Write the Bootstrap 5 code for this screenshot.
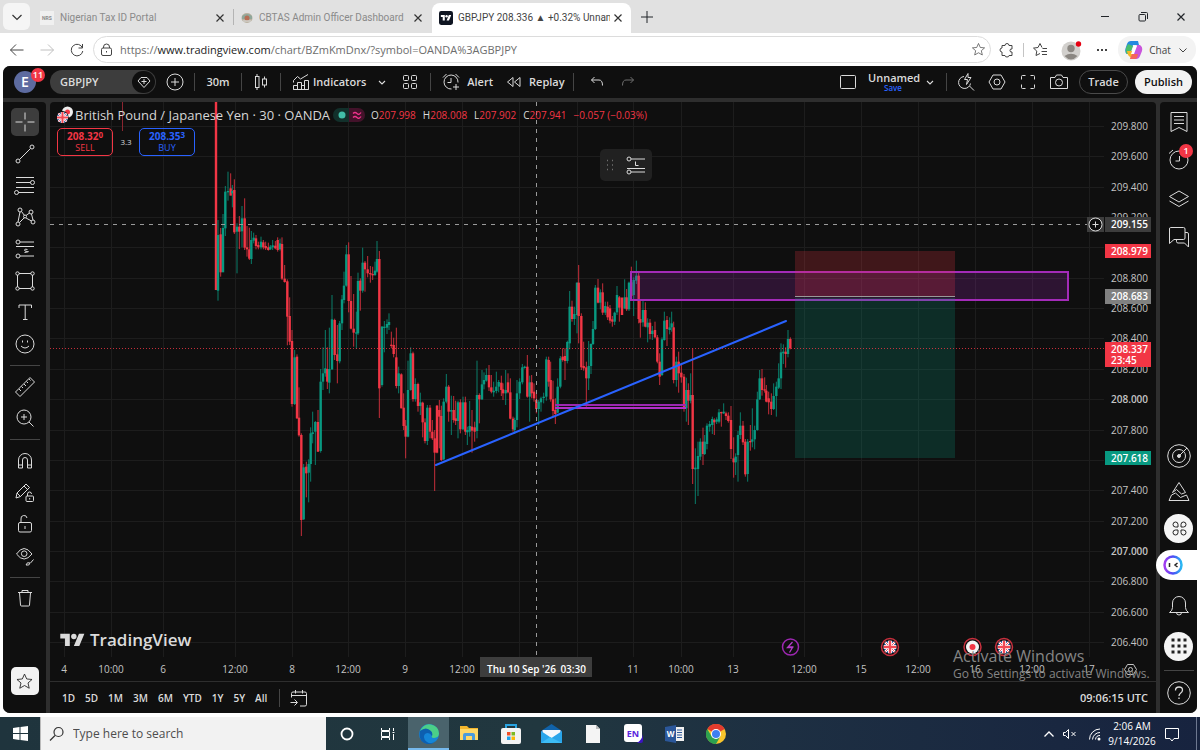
<!DOCTYPE html>
<html lang="en">
<head>
<meta charset="utf-8">
<meta name="viewport" content="width=device-width, initial-scale=1">
<title>GBPJPY 208.336 ▲ +0.32% Unnamed</title>
<link href="https://cdn.jsdelivr.net/npm/bootstrap@5.3.0/dist/css/bootstrap.min.css" rel="stylesheet">
<style>
  body { font-family: "Open Sans", "Noto Sans", sans-serif; font-size: 11px; line-height: 16px; background: #fff; color: #dbdbdb; }
  button { background: none; border: 0; padding: 0; color: inherit; font: inherit; white-space: nowrap; }
  svg { flex: none; display: block; }
  .ico { width: 24px; height: 24px; fill: none; stroke: currentColor; stroke-width: 1; }
  .slot { display: inline-flex; align-items: center; justify-content: center; flex: none; }
  .s16 { width: 16px; } .s24 { width: 24px; } .s30 { width: 30px; } .s32 { width: 32px; } .s38 { width: 38px; }

  /* browser tabs */
  .tabstrip { height: 33px; background: #e1e1e1; color: #8a8a8a; font-family: Roboto, sans-serif; font-size: 10px; }
  .tabmenu { width: 27px; height: 27px; background: #f5f5f5; border-radius: 6px; color: #333; margin: 0 3px; }
  .tab { height: 30px; margin-top: 3px; flex: none; padding: 0 5px 0 7px; }
  .tab span { flex: 1; overflow: hidden; white-space: nowrap; margin-left: 6px; }
  .tab button { color: #333; }
  .tab-a { width: 200px; } .tab-b { width: 198px; padding-right: 2px; }
  .tab-on { width: 199px; background: #fff; border-radius: 8px 8px 0 0; color: #444; }
  .tab-on span { margin-left: 5px; }
  .tabsep { width: 1px; height: 16px; background: #b4b4b4; }
  .nrs { width: 14px; height: 14px; background: #f0f0f0; font-size: 5px; font-weight: 700; line-height: 14px; text-align: center; }

  /* address bar */
  .urlbar { height: 33px; color: #444; padding: 0 4px 0 2px; }
  .urlbar .barsep { width: 1px; height: 14px; background: #c4c4c4; }
  .address { height: 27px; border: 1px solid #dcdcdc; border-radius: 14px; padding: 0; min-width: 0; margin-left: 1px; }
  .address a { color: #6d6d6d; text-decoration: none; font-size: 11px; margin-left: 2px; white-space: nowrap; }
  .address b { color: #222; font-weight: 400; }
  .copilot { background: #f3f3f3; border-radius: 13px; height: 27px; width: 78px; font-size: 10px; gap: 6px; }

  /* charting app */
  .app { margin: 0 3px 4px; background: #2e2e2e; border-radius: 7px; overflow: hidden; min-height: 0; }
  .topbar { height: 32px; background: #0f0f0f; font-weight: 600; font-size: 11px; }
  .vsep { width: 1px; height: 18px; background: #454545; flex: none; }
  .avatar { width: 22px; height: 22px; border-radius: 50%; background: #5d6ba0; color: #fff; font-size: 14px; margin: 0 14px 0 11px; }
  .count { position: absolute; top: -3px; right: -9px; min-width: 14px; height: 14px; border-radius: 7px; background: #f23645; color: #fff; font-size: 9px; line-height: 14px; text-align: center; font-weight: 600; }
  .symbol { width: 106px; height: 24px; border-radius: 12px; background: #3d3d3d; padding: 0 1px 0 10px; }
  .symbol i { width: 23px; height: 22px; border-radius: 11px; background: #0f0f0f; }
  .interval { width: 46px; }
  .dim { color: #707070; }
  .save { font-size: 8px; line-height: 8px; color: #2962ff; font-weight: 600; }
  .layoutname { width: 50px; line-height: 12px; }
  .trade { height: 24px; width: 49px; border: 1px solid #4a4a4a; border-radius: 12px; margin-left: 8px; }
  .publish { height: 24px; width: 57px; background: #f2f2f2; color: #0f0f0f; border-radius: 12px; margin: 0 5px 0 7px; }

  .work { gap: 4px; padding-top: 4px; min-height: 0; }
  .rail { background: #0f0f0f; flex: none; padding-top: 6px; }
  .rail-l { width: 43px; border-radius: 0 4px 0 0; }
  .rail-r { width: 37px; border-radius: 4px 0 0 0; padding-bottom: 2px; }
  .tool { width: 28px; height: 28px; border-radius: 5px; flex: none; }
  .tool.on { background: #3d3d3d; }
  .tool.fav { background: #f2f2f2; color: #222; margin-bottom: 18px; }
  .g1 { height: 250px; } .g2 { height: 59px; } .g3 { height: 123px; } .g4 { height: 143px; }
  .rule { width: 30px; height: 1px; background: #454545; margin: 7px 0; flex: none; }
  .rtool { width: 37px; height: 36px; flex: none; position: relative; }
  .g4 .rtool { height: 28px; }
  .rtool .count { top: -2px; right: 4px; }
  .rail-r .rule { margin: 6px 0 4px; }
  .disc { width: 29px; height: 29px; border-radius: 50%; background: #f5f5f5; color: #222; }
  .assistant { width: 41px; height: 30px; margin: 4px 0 8px -4px; padding-right: 7px; background: #fff; border-radius: 15px 0 0 15px; z-index: 2; }

  .pane { background: #0f0f0f; border-radius: 4px 4px 0 0; min-width: 0; }
  .plot { min-height: 0; overflow: hidden; }
  .plot > svg { width: 100%; height: 100%; position: absolute; }
  .plot > svg text { font-size: 10px; fill: #c4c4c4; }
  .plot > svg .strong { font-weight: 600; }
  .plot > svg .tag { fill: #fff; font-weight: 600; }
  .legend { position: absolute; left: 7px; top: 4px; }
  .legend h1 { font-size: 13px; line-height: 18px; margin: 0 0 0 2px; font-weight: 400; color: #d6d6d6; white-space: nowrap; }
  .ohlc { color: #f23645; font-size: 10px; gap: 7px; white-space: nowrap; }
  .ohlc b { color: #dbdbdb; font-weight: 400; }
  .mood { width: 32px; height: 14px; border-radius: 7px; background: linear-gradient(90deg,#12302b 50%,#43122a 50%); margin: 0 6px 0 3px; }
  .quote { width: 56px; height: 28px; border: 1px solid; border-radius: 5px; font-size: 9px; line-height: 12px; }
  .quote strong { display: block; font-size: 10px; font-weight: 700; }
  .quote sup { font-size: 8px; top: -2px; }
  .sell { color: #f23645; } .buy { color: #2962ff; }
  .spread { width: 26px; font-size: 8px; text-align: center; }
  .floatbar { position: absolute; left: 550px; top: 47px; width: 52px; height: 32px; border-radius: 5px; background: #212121; }
  .brand { position: absolute; left: 10px; bottom: 31px; font-size: 17px; font-weight: 600; line-height: 20px; gap: 5px; }
  .watermark { position: absolute; left: 903px; bottom: -2px; color: #858585; font-size: 12px; line-height: 18px; white-space: nowrap; pointer-events: none; z-index: 3; }
  .watermark strong { display: block; font-weight: 400; font-size: 16px; }
  .ranges { height: 32px; border-top: 1px solid #2e2e2e; font-size: 10px; font-weight: 600; padding: 0 8px 0 12px; flex: none; }
  .ranges .list { gap: 10px; }
  .ranges .vsep { margin-left: 12px; }
  .utc { font-size: 11px; }

  /* desktop taskbar */
  .taskbar { height: 33px; background: linear-gradient(90deg,#1f343d 0,#21373f 45%,#1d2f42 65%,#17233f 100%); flex: none; color: #fff; }
  .start { width: 40px; }
  .finder { width: 286px; background: #f2f2f2; color: #333; padding-left: 8px; border-left: 1px solid #bbb; }
  .finder input { border: 0; background: none; outline: 0; font-size: 12px; color: #444; width: 100%; padding: 0 0 0 8px; }
  .finder input::placeholder { color: #4d4d4d; opacity: 1; }
  .app-ico { width: 41px; height: 33px; }
  .app-ico.on { background: #4a636c; box-shadow: inset 0 -2px #76b9ed; }
  .clock { font-size: 10px; line-height: 15px; width: 48px; text-align: center; }
  .notif { width: 30px; margin-right: 8px; }
  .peek { width: 4px; border-left: 1px solid #6d7890; }
  .tray { gap: 1px; }
</style>
</head>
<body class="vh-100 overflow-hidden d-flex flex-column">

<svg width="0" height="0" class="position-absolute">
  <defs>
    <symbol id="uk" viewBox="0 0 16 16"><circle cx="8" cy="8" r="8" fill="#1a4f9c"/><path d="M2 2l12 12M14 2L2 14" stroke="#fff" stroke-width="3"/><path d="M2 2l12 12M14 2L2 14" stroke="#f23645" stroke-width="1"/><path d="M8 0v16M0 8h16" stroke="#fff" stroke-width="5"/><path d="M8 0v16M0 8h16" stroke="#f24854" stroke-width="3"/></symbol>
    <symbol id="close" viewBox="0 0 24 24"><path d="M8.500 8.500l7 7M15.500 8.500l-7 7" stroke="currentColor" fill="none" stroke-width="1.200"/></symbol>
    <symbol id="down" viewBox="0 0 24 24"><path d="M9 11l3 3 3-3" stroke="currentColor" fill="none" stroke-width="1.100"/></symbol>
    <symbol id="tv" viewBox="0 0 36 28"><path d="M14 22H7V11H0V4h14v18zM28 22h-8l7.500-18h8L28 22z"/><circle cx="20" cy="8" r="4"/></symbol>
    <symbol id="star" viewBox="0 0 24 24"><path d="M12 3.500l2.500 5.600 6.100.600-4.600 4 1.400 6L12 16.600l-5.400 3.100 1.400-6-4.600-4 6.100-.600z" fill="none" stroke="currentColor"/></symbol>
  </defs>
</svg>

<div class="tabstrip d-flex align-items-center flex-shrink-0">
  <button class="tabmenu slot" aria-label="Tab menu"><svg class="ico"><path d="M7.500 10l4.500 4.500 4.500-4.500" stroke-width="1.200"/></svg></button>
  <div class="tab tab-a d-flex align-items-center"><i class="nrs fst-normal">NRS</i><span>Nigerian Tax ID Portal</span><button class="slot s16" aria-label="Close tab"><svg class="ico"><use href="#close"/></svg></button></div>
  <div class="tabsep"></div>
  <div class="tab tab-b d-flex align-items-center"><svg width="12" height="12" viewBox="0 0 12 12"><ellipse cx="6" cy="6" rx="5.500" ry="5" fill="#b9b0a0"/><path d="M1 4q5-4 10 0v3H1z" fill="#8fa79a"/><circle cx="6" cy="6" r="2.500" fill="#b76e55"/><path d="M2 9h8" stroke="#ddd"/></svg><span>CBTAS Admin Officer Dashboard</span><button class="slot s16 me-1" aria-label="Close tab"><svg class="ico"><use href="#close"/></svg></button></div>
  <div class="tab tab-on d-flex align-items-center"><svg width="14" height="14" viewBox="0 0 13 13"><rect width="13" height="13" rx="2" fill="#0f1522"/><use href="#tv" x="1.500" y="2.500" width="10" height="8" fill="#fff"/></svg><span>GBPJPY 208.336 ▲ +0.32% Unnam</span><button class="slot s16" aria-label="Close tab"><svg class="ico"><use href="#close"/></svg></button></div>
  <button class="slot s32 text-dark" aria-label="New tab"><svg class="ico"><path d="M12 6v12M6 12h12"/></svg></button>
  <div class="ms-auto d-flex text-dark">
    <button class="slot s38" aria-label="Minimize"><svg class="ico"><path d="M8 11.500h8"/></svg></button>
    <button class="slot s38" aria-label="Restore"><svg class="ico"><rect x="8" y="9.500" width="6.500" height="6.500" rx="1"/><path d="M10 7.500h5.500q1 0 1 1V14"/></svg></button>
    <button class="slot s38" aria-label="Close window"><svg class="ico"><use href="#close"/></svg></button>
  </div>
</div>

<div class="urlbar d-flex align-items-center flex-shrink-0">
  <button class="slot s30" aria-label="Back"><svg class="ico"><path d="M18.500 12H5.500M11 6.500L5.500 12l5.500 5.500"/></svg></button>
  <button class="slot s30" aria-label="Forward"><svg class="ico"><path d="M5.500 12h13M13 6.500l5.500 5.500-5.500 5.500" stroke="#c0c0c0"/></svg></button>
  <button class="slot s30" aria-label="Reload"><svg class="ico"><path d="M17.500 10A5.800 5.800 0 1 0 17.800 13M17.500 6v4h-4"/></svg></button>
  <div class="address d-flex align-items-center flex-grow-1">
    <svg class="ico"><rect x="7.500" y="10" width="10" height="7.500" rx="1.500"/><path d="M9.500 10V9a3 3 0 0 1 6 0v1M12.500 13v1.500"/></svg>
    <a href="#">https://<b>www.tradingview.com</b>/chart/BZmKmDnx/?symbol=OANDA%3AGBPJPY</a>
    <button class="slot s24 ms-auto" aria-label="Bookmark"><svg width="17" height="17"><use href="#star"/></svg></button>
  </div>
  <button class="slot s32" aria-label="Extensions"><svg class="ico"><path d="M8 7.500h2q0-2 2-2t2 2h3v3.500q-2-.500-2 1.500t2 1.500v3.500h-3q0 1.500-2 1.500t-2-1.500H7V14q-2 0-2-2t2-2V7.500z"/></svg></button>
  <div class="barsep"></div>
  <button class="slot s32" aria-label="Favorites"><svg class="ico"><path d="M14 9.500l-2-4-2 4-4.500.600 3.300 3-.800 4.400 4-2M14.500 10.500H19M13.500 13.500H19M14 16.500h5"/></svg></button>
  <button class="slot s30" aria-label="Profile"><svg width="22" height="22" viewBox="0 0 22 22"><circle cx="11" cy="12" r="9.500" fill="#d2d0cd"/><circle cx="11" cy="9.500" r="3.700" fill="#8b8782"/><path d="M4.500 17q6.500-4.500 13 0-6.500 7-13 0z" fill="#8b8782"/><circle cx="18.500" cy="5" r="2.700" fill="#e60012"/></svg></button>
  <button class="slot s32" aria-label="Settings and more"><svg class="ico"><path d="M7 12h2M11 12h2M15 12h2" stroke-width="2"/></svg></button>
  <button class="copilot slot"><svg width="18" height="18" viewBox="0 0 18 18"><path d="M6 0h7l1 4H8L5 13H2q-3-2-1-7L2 3q1-3 4-3z" fill="#2388e0"/><path d="M1 7l2-4 5 2-3 8H2q-2-1-1-6z" fill="#49bd6c"/><path d="M2 10h5l2 4-3 3-3-3z" fill="#f5b52a"/><path d="M12 4h3q3 2 2 6l-2 5q-1 3-4 3H5l3-5z" fill="#c955dc"/><path d="M7 13h6l-1 4-2 1H5z" fill="#f4655c"/><path d="M9 5h3l-3 8H6z" fill="#fff"/></svg>Chat<svg width="12" height="12" viewBox="0 0 12 12" fill="none" stroke="currentColor"><path d="M2.500 4.500L6 8l3.500-3.500"/></svg></button>
</div>

<main class="app flex-grow-1 d-flex flex-column">
  <header class="topbar d-flex align-items-center flex-shrink-0">
    <button class="avatar slot position-relative" aria-label="Account">E<span class="count">11</span></button>
    <button class="symbol d-flex align-items-center justify-content-between">GBPJPY<i class="slot"><svg class="ico"><path d="M9 7.500h6l3 3.500-6 6.500L6 11zM12 9v5M9.500 11.500h5"/></svg></i></button>
    <button class="slot s38" aria-label="Compare"><svg class="ico"><circle cx="12" cy="12" r="8"/><path d="M12 8v8M8 12h8"/></svg></button>
    <div class="vsep"></div>
    <button class="slot interval">30m</button>
    <div class="vsep"></div>
    <button class="slot s38" aria-label="Candles"><svg class="ico"><rect x="6.500" y="6.500" width="3.500" height="11"/><path d="M8 4v2.500M8 17.500V20M15.500 6.500v2.500M15.500 15v2.500"/><rect x="13.500" y="9" width="4" height="6"/></svg></button>
    <div class="vsep"></div>
    <button class="slot ms-2"><svg class="ico"><path d="M4.500 12.500v-2l4-4 3 2.500 7.500-4.500M4.500 19.500v-4h4v4zM8.500 19.500v-7h4v7M12.500 15.500h3v4M15.500 19.500v-9h4v9zM4.500 19.500h15"/></svg><span>Indicators</span></button>
    <button class="slot s32" aria-label="Indicator templates"><svg class="ico"><use href="#down"/></svg></button>
    <button class="slot s24" aria-label="Layouts"><svg class="ico"><rect x="5.500" y="5.500" width="5" height="5" rx="1"/><rect x="13.500" y="5.500" width="5" height="5" rx="1"/><rect x="5.500" y="13.500" width="5" height="5" rx="1"/><rect x="13.500" y="13.500" width="5" height="5" rx="1"/></svg></button>
    <div class="vsep ms-2"></div>
    <button class="slot ms-2"><svg class="ico"><path d="M19 12.500A7 7 0 1 0 12.500 19M12 8v4.500H8.500M4 7.500L7.500 4M16.500 4L20 7.500M17 14v6M14 17h6"/></svg><span class="ms-1">Alert</span></button>
    <button class="slot ms-2"><svg class="ico"><path d="M12 7.500v9L6.500 12zM19 7.500v9L13.500 12z"/></svg><span class="ms-1">Replay</span></button>
    <div class="vsep ms-2"></div>
    <button class="slot s38 ms-1" aria-label="Undo"><svg class="ico"><path d="M9.500 7L6.500 10l3 3M6.500 10H14q3.500 0 3.500 5.500"/></svg></button>
    <button class="slot s24 dim" aria-label="Redo"><svg class="ico"><path d="M14.500 7l3 3-3 3M17.500 10H10q-3.500 0-3.500 5.500"/></svg></button>
    <div class="d-flex align-items-center ms-auto">
      <button class="slot s32" aria-label="Layout setup"><svg class="ico"><rect x="4.500" y="5.500" width="15" height="13" rx="1"/></svg></button>
      <button class="layoutname ms-1">Unnamed<span class="save d-block">Save</span></button>
      <button class="slot s24" aria-label="Layout menu"><svg class="ico"><use href="#down"/></svg></button>
      <div class="vsep ms-1"></div>
      <button class="slot s38" aria-label="Quick search"><svg class="ico"><path d="M10 6.500a6 6 0 1 0 6.500 7M15.500 16l4.500 4.500M14 3.500l-3.500 6h3l-1 5 4.500-7h-3z"/></svg></button>
      <button class="slot s24" aria-label="Settings"><svg class="ico"><path d="M8 5h8l4 7-4 7H8l-4-7z"/><circle cx="12" cy="12" r="3"/></svg></button>
      <button class="slot s38" aria-label="Fullscreen"><svg class="ico"><path d="M5.500 9.500v-3q0-1 1-1h3M14.500 5.500h3q1 0 1 1v3M18.500 14.500v3q0 1-1 1h-3M9.500 18.500h-3q-1 0-1-1v-3"/></svg></button>
      <button class="slot s24" aria-label="Snapshot"><svg class="ico"><path d="M3.500 7.500H8l1.500-2.500h5L16 7.500h4.500v11h-17z"/><circle cx="12" cy="12.500" r="3.500"/></svg></button>
      <button class="trade">Trade</button>
      <button class="publish">Publish</button>
    </div>
  </header>

  <div class="work d-flex flex-grow-1">
    <aside class="rail rail-l d-flex flex-column align-items-center">
      <div class="g1 d-flex flex-column justify-content-between">
        <button class="tool slot on" aria-label="Cross"><svg class="ico"><path d="M12 2.500v7M12 14.500v7M2.500 12h7M14.500 12h7"/></svg></button>
        <button class="tool slot" aria-label="Trend line"><svg class="ico"><circle cx="5" cy="19" r="2"/><circle cx="19" cy="5" r="2"/><path d="M6.500 17.500l11-11"/></svg></button>
        <button class="tool slot" aria-label="Fibonacci"><svg class="ico"><path d="M3 4.500h18M3 9.500h14.500M3 14.500h18M5.500 19.500H21"/><circle cx="19.500" cy="9.500" r="2"/><circle cx="3.500" cy="19.500" r="2"/></svg></button>
        <button class="tool slot" aria-label="Patterns"><svg class="ico"><path d="M5 17L7 7M8.500 6.500l3 4M13 10.500L16.500 8M18.500 9l1.500 6M6.500 17.500l5-5M13 13l5.500 3"/><circle cx="7" cy="5" r="2"/><circle cx="18" cy="7" r="2"/><circle cx="5" cy="19" r="2"/><circle cx="20" cy="17" r="2"/><circle cx="12" cy="11.500" r="1.500"/></svg></button>
        <button class="tool slot" aria-label="Forecast"><svg class="ico"><circle cx="5" cy="5" r="2"/><circle cx="5" cy="19" r="2"/><path d="M7 5h14M3 9.500h18M7 19h14M14.500 12.500q-3-1-3 .500t3 1.500-3 1"/></svg></button>
        <button class="tool slot" aria-label="Shapes"><svg class="ico"><path d="M6 4.500h12M6 19.500h12M4.500 6v12M19.500 6v12"/><circle cx="4.500" cy="4.500" r="1.700"/><circle cx="19.500" cy="4.500" r="1.700"/><circle cx="4.500" cy="19.500" r="1.700"/><circle cx="19.500" cy="19.500" r="1.700"/></svg></button>
        <button class="tool slot" aria-label="Text"><svg class="ico"><path d="M6 8V5h12.500v3M12.200 5v14.500M10 19.500h4.500"/></svg></button>
        <button class="tool slot" aria-label="Icons"><svg class="ico"><circle cx="12" cy="12" r="9"/><path d="M8 14q4 4 8 0M9.500 8.500v2M14.500 8.500v2"/></svg></button>
      </div>
      <div class="rule"></div>
      <div class="g2 d-flex flex-column justify-content-between">
        <button class="tool slot" aria-label="Measure"><svg class="ico"><path d="M2.500 17L17 2.500l4.500 4.500L7 21.500zM6 14l2 2M8.500 11.500l1.500 1.500M11 9l2 2M13.500 6.500L15 8M16 4l1.500 1.500"/></svg></button>
        <button class="tool slot" aria-label="Zoom in"><svg class="ico"><circle cx="11" cy="11" r="7"/><path d="M16 16l4.500 4.500M11 8v6M8 11h6"/></svg></button>
      </div>
      <div class="rule"></div>
      <div class="g3 d-flex flex-column justify-content-between">
        <button class="tool slot" aria-label="Magnet"><svg class="ico"><path d="M5.500 19v-8a6.500 6.500 0 0 1 13 0v8h-4v-8a2.500 2.500 0 0 0-5 0v8zM5.500 16h4M14.500 16h4"/></svg></button>
        <button class="tool slot" aria-label="Keep drawing"><svg class="ico"><path d="M3 17l1-5 9-9 3.500 3.500-9 9zM11 5l3.500 3.500M4 12l3.500 3.500"/><rect x="13" y="15" width="7.500" height="5.500" rx="1"/><path d="M14.500 15v-2a2 2 0 0 1 4 0M16.700 17v1.500"/></svg></button>
        <button class="tool slot" aria-label="Lock drawings"><svg class="ico"><rect x="5.500" y="10.500" width="13" height="9.500" rx="1.500"/><path d="M8 10.500V7a3 3 0 0 1 6-1M12 14v3" /></svg></button>
        <button class="tool slot" aria-label="Hide drawings"><svg class="ico"><path d="M3.500 10q7.500-11 15.500 0-8 10-15.500 0z"/><circle cx="11.200" cy="9.700" r="2.800"/><path d="M20.500 15.500l-3 3.500M13 21q1-3.500 4-2-.500 3-4 2z"/></svg></button>
      </div>
      <div class="rule"></div>
      <button class="tool slot" aria-label="Remove"><svg class="ico"><path d="M5 5.500h14M9 5.500v-2h6v2M6.500 5.500l1 12.500q0 1 1 1h7q1 0 1-1l1-12.500"/></svg></button>
      <button class="tool slot fav mt-auto" aria-label="Favorites"><svg width="21" height="21"><use href="#star"/></svg></button>
    </aside>

    <section class="pane d-flex flex-column flex-grow-1 position-relative">
      <div class="plot flex-grow-1 position-relative">
        <svg id="chart" viewBox="50 102 1106 579" preserveAspectRatio="xMinYMin meet"></svg>
        <div class="legend">
          <div class="d-flex align-items-center">
            <svg width="16" height="18" viewBox="0 0 16 18"><circle cx="10.500" cy="6" r="5.500" fill="#eee"/><circle cx="10.500" cy="6" r="2.500" fill="#f23645"/><circle cx="5.500" cy="11" r="6" fill="#0f0f0f"/><use href="#uk" x="0" y="6" width="11" height="11"/></svg>
            <h1>British Pound / Japanese Yen · 30 · OANDA</h1>
            <div class="mood slot"><svg width="32" height="14" fill="none"><circle cx="9" cy="7" r="3.500" fill="#42bda8"/><path d="M20 5.500q2-2 4 0t4-1M20 9.500q2-2 4 0t4-1" stroke="#f0328c" stroke-width="1.300"/></svg></div>
            <div class="ohlc d-flex"><span><b>O</b>207.998</span><span><b>H</b>208.008</span><span><b>L</b>207.902</span><span><b>C</b>207.941</span><span>−0.057 (−0.03%)</span></div>
          </div>
          <div class="d-flex align-items-center mt-1">
            <button class="quote sell"><strong>208.32<sup>0</sup></strong>SELL</button>
            <span class="spread">3.3</span>
            <button class="quote buy"><strong>208.35<sup>3</sup></strong>BUY</button>
          </div>
        </div>
        <div class="floatbar d-flex align-items-center">
          <svg class="ico dim"><path d="M7 7.500h1M7 12h1M7 16.500h1M12 7.500h1M12 12h1M12 16.500h1" stroke-width="1.500"/></svg>
          <svg class="ico"><circle cx="5" cy="6" r="2"/><circle cx="5" cy="19" r="2"/><path d="M7 6h14M3 15.500h18M7 19h14M11.500 8.500v4h3"/></svg>
        </div>
        <div class="brand d-flex align-items-center"><svg width="25" height="19"><use href="#tv" fill="#dbdbdb"/></svg>TradingView</div>
        <div class="watermark"><strong>Activate Windows</strong>Go to Settings to activate Windows.</div>
      </div>
      <footer class="ranges d-flex align-items-center">
        <div class="list d-flex"><button>1D</button><button>5D</button><button>1M</button><button>3M</button><button>6M</button><button>YTD</button><button>1Y</button><button>5Y</button><button>All</button></div>
        <div class="vsep"></div>
        <button class="slot s38" aria-label="Go to date"><svg class="ico"><path d="M4.500 11.500v-4q0-1.500 1.500-1.500h12q1.500 0 1.500 1.500v11q0 1.500-1.500 1.500h-5M4.500 9.500h15M8.500 4v3.500M15.500 4v3.500M3.500 16.500H10M7.500 13.500l3 3-3 3"/></svg></button>
        <button class="ms-auto utc">09:06:15 UTC</button>
      </footer>
    </section>

    <aside class="rail rail-r d-flex flex-column align-items-center">
      <div class="g4 d-flex flex-column justify-content-between">
        <button class="rtool slot" aria-label="Watchlist"><svg class="ico"><path d="M4 2.500h16v19l-8-4-8 4zM7 6.500h10M7 10h10M7 13.500h10"/></svg></button>
        <button class="rtool slot" aria-label="Alerts"><svg class="ico"><circle cx="12" cy="12" r="9"/><path d="M12.500 8v5H8.500M2 5.500L6 2"/></svg><span class="count">1</span></button>
        <button class="rtool slot" aria-label="Object tree"><svg class="ico"><path d="M12 4l9.500 5.500-9.500 5.500-9.500-5.500zM2.500 14l9.500 5.500 9.500-5.500"/></svg></button>
        <button class="rtool slot" aria-label="Chats"><svg class="ico"><path d="M3.500 2.500h13q1.500 0 1.500 1.500v9q0 1.500-1.500 1.500H7l-4.500 4V4q0-1.500 1-1.500zM18 7.500h2q1.500 0 1.500 1.500v13l-4-4H11q-1.500 0-1.500-1.500v-2"/></svg></button>
      </div>
      <button class="rtool slot mt-auto" aria-label="Screener"><svg class="ico"><circle cx="12" cy="12" r="11.300"/><circle cx="12" cy="12" r="6.500"/><circle cx="12" cy="12" r="1.500" fill="currentColor"/><path d="M13 11l7-7"/></svg></button>
      <button class="rtool slot" aria-label="Pine"><svg class="ico"><path d="M5.500 12.500L12 2.500l6.500 10M5.500 12.500l4-3 5 4.500 4-1.500M4.500 15L2 20.500h20L19.500 15M4.500 15l4-2 5 4.500 6-2.500"/></svg></button>
      <button class="rtool slot" aria-label="Apps"><span class="disc slot"><svg class="ico"><path d="M11 11H8.500A2.500 2.500 0 1 1 11 8.500zM14 11h2.500A2.500 2.500 0 1 0 14 8.500zM11 14H8.500A2.500 2.500 0 1 0 11 16.500zM14 14h2.500A2.500 2.500 0 1 1 14 16.500z"/></svg></span></button>
      <button class="assistant slot" aria-label="Assistant"><svg width="20" height="20" viewBox="0 0 20 20" fill="none"><defs><linearGradient id="ring"><stop stop-color="#a23cf0"/><stop offset=".5" stop-color="#4a4df5"/><stop offset="1" stop-color="#2ab8f2"/></linearGradient></defs><circle cx="10" cy="10" r="8.500" stroke="url(#ring)" stroke-width="2.500"/><path d="M6.500 8v4M14.500 8L12 10l2.500 2" stroke="#222" stroke-width="1.500"/></svg></button>
      <button class="rtool slot" aria-label="Notifications"><svg class="ico"><path d="M2.500 18.500q3-2 3-5V9a6.500 6.500 0 0 1 13 0v4.500q0 3 3 5zM9.500 18.500a2.500 2.500 0 0 0 5 0"/></svg></button>
      <button class="rtool slot mt-1" aria-label="More"><span class="disc slot"><svg class="ico"><path d="M4.500 6h3M10.500 6h3M16.500 6h3M4.500 12h3M10.500 12h3M16.500 12h3M4.500 18h3M10.500 18h3M16.500 18h3" stroke-width="3"/></svg></span></button>
      <div class="rule"></div>
      <button class="rtool slot" aria-label="Help"><svg class="ico"><circle cx="12" cy="12" r="11.300"/><path d="M8.500 9.500q0-3.500 3.500-3.500t3.500 3q0 2-2 3.200-1.500 1-1.500 2.800M12 16.500v1.500" stroke-width="1.300"/></svg></button>
    </aside>
  </div>
</main>

<footer class="taskbar d-flex align-items-stretch">
  <button class="start slot" aria-label="Start"><svg width="15" height="15" viewBox="0 0 15 15" fill="#fff"><path d="M0 2l6.500-1v6H0zM7.500 1L15 0v7H7.500zM0 8h6.500v6L0 13zM7.500 8H15v7l-7.500-1z"/></svg></button>
  <div class="finder d-flex align-items-center"><svg width="16" height="16" viewBox="0 0 16 16" fill="none" stroke="#333" stroke-width="1.200"><circle cx="9.500" cy="6" r="4.500"/><path d="M6 9.500L1 14.500"/></svg><input type="text" placeholder="Type here to search" aria-label="Type here to search"></div>
  <button class="app-ico slot" aria-label="Cortana"><svg width="16" height="16" fill="none" stroke="#fff" stroke-width="1.800"><circle cx="8" cy="8" r="5.500"/></svg></button>
  <button class="app-ico slot" aria-label="Task view"><svg class="ico"><path d="M5.500 6v2.500h8V6M5.500 18v-2.500h8V18M5.500 9.500h8v5h-8zM17.500 6v3M17.500 12v6M16.500 10.500h2"/></svg></button>
  <button class="app-ico slot on" aria-label="Edge"><svg width="20" height="20" viewBox="0 0 20 20"><circle cx="10" cy="10" r="10" fill="#1586d8"/><path d="M1 7Q5-1 12 .500q8 2 8 9 0 4-5 4.500-3 0-2-2 1-6-6-6-4 0-6 1z" fill="#4bcf88"/><path d="M1 7q6-5 11 0 2 2 1 5-3-5-7-2-3 4 2 8 4 3 8-1-3 4-8 3Q-1 18 1 7z" fill="#0d5fb0"/></svg></button>
  <button class="app-ico slot" aria-label="Files"><svg width="19" height="17" viewBox="0 0 19 17"><path d="M0 1h7l2 2h9v12H0z" fill="#f4b62c"/><path d="M0 4h18v11H0z" fill="#ffd867"/><path d="M3 15v-5q0-2 2-2h8q2 0 2 2v5h-3v-4H6v4z" fill="#4b9bdc"/></svg></button>
  <button class="app-ico slot" aria-label="Store"><svg width="20" height="20" viewBox="0 0 20 20"><path d="M5 5V1h10v4" fill="none" stroke="#29a3e0" stroke-width="2"/><rect y="4" width="20" height="16" rx="2" fill="#f3f3f3"/><path d="M6 8h3.500v3.500H6z" fill="#f04e26"/><path d="M10.500 8H14v3.500h-3.500z" fill="#7cb922"/><path d="M6 12.500h3.500V16H6z" fill="#1ea2ec"/><path d="M10.500 12.500H14V16h-3.500z" fill="#fbb906"/></svg></button>
  <button class="app-ico slot" aria-label="Mail"><svg width="21" height="19" viewBox="0 0 21 19"><path d="M0 7L10.500 0 21 7v12H0z" fill="#1062a8"/><path d="M1.500 6h18v10h-18z" fill="#f3f8fc"/><path d="M0 7l10.500 7L21 7v12H0z" fill="#29a5ea"/><path d="M0 19l9-6 12 6z" fill="#3dbdf5"/></svg></button>
  <button class="app-ico slot" aria-label="Document"><svg width="14" height="18" viewBox="0 0 14 18"><path d="M0 0h10l4 4v14H0z" fill="#f4f4f4"/><path d="M10 0v4h4z" fill="#bbb"/></svg></button>
  <button class="app-ico slot" aria-label="EN"><svg width="19" height="19" viewBox="0 0 19 19"><rect width="18" height="18" rx="3" fill="#fff"/><path d="M19 10q-1 6-6 9h4q2 0 2-2z" fill="#3c14c0"/><text x="9" y="12.500" font-size="9" font-weight="700" text-anchor="middle" fill="#5a25dd">EN</text></svg></button>
  <button class="app-ico slot" aria-label="Word"><svg width="19" height="18" viewBox="0 0 19 18"><rect x="8" y="2" width="11" height="14" fill="#f0f0f0"/><path d="M12 5h5M12 7.500h5M12 10h5M12 12.500h5" stroke="#2b579a"/><path d="M0 2l11-2v18L0 16z" fill="#2b579a"/><text x="5.500" y="12" font-size="8" font-weight="700" text-anchor="middle" fill="#fff">W</text></svg></button>
  <button class="app-ico slot" aria-label="Chrome"><svg width="20" height="20" viewBox="0 0 20 20"><circle cx="10" cy="10" r="10" fill="#f9c52c"/><path d="M10 10L1.300 5a10 10 0 0 1 17.400 0z" fill="#e33b2e"/><path d="M10 10v0L5.700 12.500 1.300 5A10 10 0 0 0 10 20l4.300-7.500z" fill="#2da14f"/><circle cx="10" cy="10" r="5" fill="#fff"/><circle cx="10" cy="10" r="4" fill="#3d7ff0"/></svg></button>
  <div class="tray ms-auto d-flex align-items-center">
    <button class="slot s16" aria-label="Hidden icons"><svg class="ico"><path d="M7.500 14.500L12 10l4.500 4.500" stroke-width="1.300"/></svg></button>
    <button class="slot s24" aria-label="Muted"><svg class="ico"><path d="M5.500 10.500h2l3-3v9l-3-3h-2zM13.500 10l4 4M17.500 10l-4 4"/></svg></button>
    <button class="slot s24" aria-label="Network"><svg class="ico"><path d="M6.500 17.500A10.500 10.500 0 0 1 17 7M9.500 17.500A7.500 7.500 0 0 1 17 10.500M12.500 17.500A4.500 4.500 0 0 1 17 13.500"/><circle cx="16" cy="17" r="1.500" fill="currentColor" stroke="none"/></svg></button>
    <button class="clock">2:06 AM<br>9/14/2026</button>
    <button class="slot notif" aria-label="Notifications"><svg class="ico"><path d="M5.500 6.500h13v10H14L12 19l-2-2.500H5.500z"/></svg></button>
    <div class="peek h-100"></div>
  </div>
</footer>

<script>
// Chart geometry. Bars are listed as [x, high, low, bodyTop, bodyBottom, rising] in thirds of a unit from each block's origin.
const blocks = [
 {x:200,y:160,bars:[[48,-180,390,-180,390,0],[54,180,422,225,392,1],[62,204,350,223,337,0],[69,162,320,204,337,1],[76,78,228,95,205,1],[84,35,122,93,97,1],[92,40,105,85,107,0],[97,75,142,93,100,1],[103,58,222,90,217,0],[111,190,340,200,215,1],[118,168,267,200,215,0],[126,138,262,175,214,1],[134,115,270,175,263,0],[141,198,290,262,268,0],[148,203,300,268,296,0],[154,213,312,240,297,1],[161,218,250,233,242,1],[168,225,268,235,258,0],[175,245,268,255,262,0],[183,230,268,245,262,1],[190,240,268,247,262,0],[197,245,270,258,265,0],[205,248,272,262,270,0],[211,255,270,260,268,1],[218,240,270,256,262,1],[226,243,268,257,265,0],[233,232,275,240,270,0],[240,236,272,250,268,1],[246,232,360,252,356,0],[254,315,368,356,366,0],[262,358,556,364,470,0],[269,412,555,468,545,0],[276,510,740,543,732,0],[284,570,735,592,732,1],[291,583,777,590,775,0],[297,682,830,773,826,0],[304,820,1128,825,1080,0],[311,912,1080,922,1078,1],[319,905,1012,920,940,0],[326,898,1027,912,938,1],[332,802,965,820,912,1],[338,755,850,817,822,1],[346,783,915,786,815,1],[354,750,876,786,875,0],[362,627,878,665,873,1],[369,562,690,640,665,1],[376,510,650,625,640,1],[382,562,687,627,665,0],[388,503,700,627,668,1],[396,405,630,478,628,1],[404,476,600,480,585,0],[412,495,670,583,603,0],[419,483,610,490,604,1],[426,405,510,418,490,1],[432,335,430,377,420,1],[439,255,380,283,377,1],[446,247,457,283,423,0],[453,348,508,423,506,0],[461,402,560,506,518,0],[469,455,567,517,521,1],[474,338,525,363,520,1],[481,355,452,362,392,0],[488,263,398,308,392,1],[495,303,395,308,328,0],[503,288,352,328,340,0],[511,318,368,339,343,0],[518,320,360,342,346,0],[525,305,348,332,345,1],[531,243,338,297,335,1],[538,273,774,297,685,0],[546,498,680,500,675,1],[553,483,577,500,504,1],[561,478,522,492,503,1],[567,460,510,486,495,1],[574,515,565,554,558,0],[581,533,592,555,582,0],[589,503,685,592,678,0]]},
 {x:370,y:230,bars:[[86,410,490,430,468,1],[94,430,535,433,535,0],[101,490,600,533,588,0],[107,570,685,587,620,0],[114,392,622,480,620,1],[122,352,482,370,480,1],[129,365,515,370,507,0],[136,445,515,462,507,1],[144,458,545,462,528,0],[151,488,555,517,528,1],[158,515,622,518,577,0],[165,565,640,577,633,0],[172,525,645,533,633,1],[180,525,625,533,605,0],[187,570,630,605,625,0],[194,600,783,625,668,0],[201,525,670,527,668,0],[208,510,655,540,560,0],[214,527,693,558,690,0],[221,505,690,515,688,1],[229,432,520,470,515,1],[236,465,575,470,545,0],[244,497,615,540,545,1],[251,498,578,540,570,0],[257,512,585,565,573,0],[264,512,625,517,573,1],[271,508,610,517,598,0],[279,500,600,517,598,1],[286,500,615,517,605,0],[292,590,645,600,607,1],[299,513,620,588,605,1],[306,540,668,590,602,0],[314,575,635,592,605,0],[321,392,625,495,603,1],[328,490,580,495,508,0],[336,420,510,463,508,1],[342,427,478,450,463,1],[349,415,455,435,452,1],[357,405,483,435,472,0],[364,435,490,472,485,0],[371,455,500,482,487,1],[379,425,490,470,483,1],[386,450,487,456,470,1],[394,437,498,458,480,0],[399,460,510,478,490,0],[407,420,525,480,490,1],[414,430,490,457,487,0],[421,445,568,487,566,0],[429,560,605,566,598,0],[434,563,612,570,600,1],[441,450,592,490,570,1],[449,445,507,455,490,1],[457,402,463,412,457,1],[464,407,416,410,414,1],[472,375,503,410,500,0],[479,437,575,457,500,1],[485,435,505,457,490,0],[492,460,515,485,505,0],[499,490,550,510,537,0],[506,510,585,515,537,1],[513,500,545,505,517,1],[521,488,520,500,504,1],[529,380,512,388,500,1],[536,380,470,390,455,0],[542,395,515,450,508,0],[549,452,558,508,543,0],[556,505,582,540,552,0],[563,445,550,470,548,1],[571,378,475,385,470,1],[578,355,395,380,390,0],[585,355,450,378,393,0],[592,332,400,336,393,1],[599,183,358,230,340,1],[606,212,275,230,267,0],[613,230,285,252,267,1],[621,157,310,158,255,1],[626,105,340,158,258,0],[634,250,420,258,412,0],[641,335,422,408,415,0]]},
 {x:560,y:240,bars:[[79,365,500,382,415,0],[86,303,450,378,415,1],[93,310,402,312,378,1],[99,243,315,267,312,1],[106,135,270,143,267,1],[114,117,190,143,188,0],[121,148,208,157,188,1],[128,130,225,157,218,0],[136,185,225,198,218,1],[143,185,240,200,232,0],[150,195,250,205,242,0],[157,228,260,238,245,0],[164,215,255,218,245,1],[171,138,225,165,217,1],[178,168,245,172,203,0],[186,172,225,173,225,0],[194,118,207,172,205,1],[200,147,213,172,208,0],[207,125,213,128,208,1],[214,80,170,127,168,0],[221,112,228,120,165,1],[229,62,132,107,122,1],[236,93,250,107,237,0],[241,180,293,237,248,0],[249,178,260,210,247,1],[256,187,262,210,260,0],[263,235,307,248,262,1],[270,237,298,248,282,0],[277,258,300,272,282,1],[285,245,295,270,292,0],[292,285,370,292,365,0],[299,340,435,365,410,0],[306,292,408,298,405,1],[313,215,302,242,300,1],[321,228,318,240,267,0],[329,232,283,262,270,1],[335,215,275,250,262,1],[341,245,430,262,420,0],[349,350,440,365,420,1],[356,335,458,365,400,0],[364,370,428,398,412,0],[372,402,515,410,507,0],[379,413,545,450,505,1],[385,430,555,450,482,0],[392,400,490,465,482,1],[398,325,732,465,687,0],[406,625,792,683,688,1],[414,605,768,648,687,1],[421,595,660,605,650,1],[429,563,675,605,642,0],[434,585,645,605,642,1],[441,550,628,557,612,1],[449,543,575,552,560,1],[457,530,582,537,555,1],[463,535,585,540,547,0],[470,532,552,538,545,1],[477,507,550,517,545,1],[484,515,560,516,520,0],[491,490,522,515,520,1],[498,515,540,520,528,0],[505,517,548,527,543,0],[513,498,657,540,627,0],[521,592,713,655,667,0],[527,640,705,650,667,1],[534,573,725,585,645,1],[541,517,597,557,585,1],[549,543,615,557,607,0],[556,597,710,605,703,0],[563,597,725,605,702,1],[571,555,632,603,607,0],[577,505,622,598,605,1],[584,557,628,570,598,1],[592,455,572,478,570,1],[599,390,480,415,478,1],[606,387,467,415,450,0],[614,412,458,448,452,0],[619,435,487,452,485,0],[626,455,523,475,487,0],[634,460,525,485,507,0],[641,430,510,468,507,1],[649,425,530,440,468,1],[656,370,447,415,443,1],[663,310,447,337,415,1],[670,313,372,335,340,1],[677,322,383,335,342,0],[684,270,352,297,342,1],[691,292,328,297,325,0]]}
];
const times = [[64,'4'],[111,'10:00'],[163,'6'],[235,'12:00'],[292,'8'],[348,'12:00'],[405,'9'],[462,'12:00'],[519,''],[577,''],[633,'11'],[681,'10:00'],[733,'13'],[804,'12:00'],[861,'15'],[918,'12:00'],[975,'16'],[1032,'12:00'],[1089,'17']];
let s = '';
const rect = (x,y,w,h,f,more='') => `<rect x="${x}" y="${y}" width="${w}" height="${h}" fill="${f}" ${more}/>`;
for (const [x] of times) s += rect(x, 102, 1, 555, '#1d1d1d');
for (let i = 0; i < 18; i++) s += rect(50, Math.round(126 + i * 30.35), 1054, 1, '#1d1d1d');
s += rect(122, 102, 1, 29, '#8b2530');
for (const b of blocks) for (const [x,h,l,t,c,up] of b.bars) {
  const cx = b.x + x / 3, col = up ? '#089981' : '#f23645';
  s += rect((cx - .5).toFixed(2), (b.y + h / 3).toFixed(2), 1, ((l - h) / 3).toFixed(2), col, 'opacity=".8"');
  s += rect((cx - 1.2).toFixed(2), (b.y + t / 3).toFixed(2), 2.4, Math.max(1, (c - t) / 3).toFixed(2), col);
}
s += rect(631, 272, 437, 28, 'rgba(156,39,176,.22)', 'stroke="#a32bb8" stroke-width="2"');
s += rect(555, 404, 131, 2, '#9c27b0') + rect(555, 407, 131, 2, '#b02fc6');
s += rect(795, 251, 160, 46, 'rgba(242,54,69,.22)') + rect(795, 298, 160, 160, 'rgba(8,153,129,.22)') + rect(795, 296, 160, 1, '#999');
s += '<path d="M436 465L786 321" stroke="#2962ff" stroke-width="2" stroke-linecap="round"/>';
s += '<path d="M50 348.500H1104" stroke="#f23645" stroke-dasharray="1 2" opacity=".8"/>';
s += '<path d="M536.500 102V657M50 224.500H1088" stroke="#9a9a9a" stroke-dasharray="4 5"/>';
const label = (x,y,t,c='',a='start') => `<text x="${x}" y="${y}" class="${c}" text-anchor="${a}">${t}</text>`;
for (let i = 0; i < 18; i++) {
  const p = (209.8 - i * .2).toFixed(3);
  if (p !== '209.000' && p !== '207.600') s += label(1111, Math.round(130 + i * 30.35), p, p === '208.000' || p === '207.000' ? 'strong' : '');
}
for (const [x,t] of times) if (t) s += label(x, 673, t, '', 'middle');
const tag = (y,h,f,t) => rect(1105, y, 46, h, f) + label(1111, y + 11, t, 'tag');
s += tag(217,15,'#3d3d3d','209.155') + tag(244,14,'#f23645','208.979') + tag(289,15,'#808080','208.683') + tag(342,25,'#f23645','208.337') + label(1111,364,'23:45','tag') + tag(451,14,'#089981','207.618');
s += rect(1087,217,17,15,'#3d3d3d') + '<circle cx="1095.500" cy="224.500" r="6.500" fill="#0f0f0f" stroke="#dbdbdb"/><path d="M1095.500 221.500v6M1092.500 224.500h6" stroke="#dbdbdb"/>';
s += rect(480,657,112,20,'#3d3d3d') + label(487,673,"Thu 10 Sep '26",'tag') + label(586,673,'03:30','tag','end');
s += '<circle cx="790.500" cy="647" r="8" fill="#0f0f0f" stroke="#9c27b0" stroke-width="1.500"/><path d="M792.500 642l-5 5.500h5l-3 5M788.500 647h5" stroke="#b43cc8" fill="none" stroke-width="1.300"/>';
for (const x of [890,1004]) s += `<circle cx="${x}" cy="647" r="8.500" fill="#0f0f0f" stroke="#c9303e" stroke-width="1.500"/><use href="#uk" x="${x-6.5}" y="640.500" width="13" height="13"/>`;
s += '<circle cx="972.500" cy="647" r="8.500" fill="#0f0f0f" stroke="#c9303e" stroke-width="1.500"/><circle cx="972.500" cy="647" r="6.500" fill="#f4f4f4"/><circle cx="972.500" cy="647" r="3" fill="#f23645"/>';
s += '<path d="M1127.500 664.500h6l3 5-3 5h-6l-3-5z" fill="none" stroke="#c4c4c4"/><circle cx="1130.500" cy="669.500" r="2" fill="none" stroke="#c4c4c4"/>';
document.getElementById('chart').innerHTML = s;
</script>
<script src="https://cdn.jsdelivr.net/npm/bootstrap@5.3.0/dist/js/bootstrap.bundle.min.js"></script>
</body>
</html>
